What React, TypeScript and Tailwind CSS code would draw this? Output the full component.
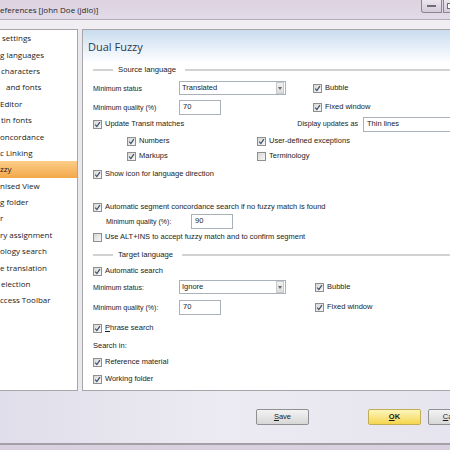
import type { ReactNode } from 'react';

const navItems = [
  { t: 'settings', pad: 'pl-[2px]' },
  { t: 'g languages', pad: 'pl-0' },
  { t: 'characters', pad: 'pl-[1px]' },
  { t: 'and fonts', pad: 'pl-[6px]' },
  { t: 'Editor', pad: 'pl-0' },
  { t: 'tin fonts', pad: 'pl-[1px]' },
  { t: 'oncordance', pad: 'pl-0' },
  { t: 'c Linking', pad: 'pl-0' },
  { t: 'zzy', pad: 'pl-0', sel: true },
  { t: 'nised View', pad: 'pl-0' },
  { t: 'g folder', pad: 'pl-0' },
  { t: 'r', pad: 'pl-0' },
  { t: 'ry assignment', pad: 'pl-0' },
  { t: 'ology search', pad: 'pl-0' },
  { t: 'e translation', pad: 'pl-0' },
  { t: 'election', pad: 'pl-[1px]' },
  { t: 'ccess Toolbar', pad: 'pl-0' },
];

function Box({ on = true }: { on?: boolean }) {
  return (
    <span className="w-[9px] h-[9px] shrink-0 border border-[#8e8f8f] bg-linear-to-br from-[#d8d8d8] to-[#f7f7f7] flex items-center justify-center">
      {on && (
        <svg viewBox="0 0 7 7" className="w-[7px] h-[7px]">
          <path d="M1.2 3.6 L2.9 5.6 L5.9 1.2" stroke="#3d4d66" strokeWidth="1.2" fill="none" />
        </svg>
      )}
    </span>
  );
}

function CheckItem({ label, on = true, className = '' }: { label: ReactNode; on?: boolean; className?: string }) {
  return (
    <div className={`flex items-center gap-[3px] shrink-0 ${className}`}>
      <Box on={on} />
      <span className="text-[7.5px] leading-none whitespace-nowrap">{label}</span>
    </div>
  );
}

function Row({ mt, children, className = '' }: { mt: string; children: ReactNode; className?: string }) {
  return <div className={`flex items-center h-[14px] ${mt} ${className}`}>{children}</div>;
}

function Section({ title, mt }: { title: string; mt: string }) {
  return (
    <Row mt={mt}>
      <div className="w-[20px] h-[2px] bg-[#d2d2d2]" />
      <span className="ml-[5px] mr-[9px] text-[7.7px] leading-none whitespace-nowrap">{title}</span>
      <div className="flex-1 h-[2px] bg-[#d2d2d2]" />
    </Row>
  );
}

function TextBox({ value, w }: { value: string; w: string }) {
  return (
    <div className={`${w} h-[15px] shrink-0 border border-[#abb1b9] bg-white pl-[3px] pt-[2px] text-[7.5px] leading-none`}>
      {value}
    </div>
  );
}

function Combo({ value }: { value: string }) {
  return (
    <div className="w-[107px] h-[14px] shrink-0 border border-[#abb1b9] bg-white flex items-center">
      <span className="flex-1 pl-[2px] text-[7.5px] leading-none">{value}</span>
      <span className="w-[8px] h-[12px] mr-px border border-[#c9c9c9] bg-linear-to-b from-[#f2f2f2] to-[#dcdcdc] flex items-center justify-center">
        <svg viewBox="0 0 4 3" className="w-[4px] h-[3px]">
          <path d="M0 0 H4 L2 3 Z" fill="#6b6b6b" />
        </svg>
      </span>
    </div>
  );
}

function Btn({ children, ok = false, className = '' }: { children: ReactNode; ok?: boolean; className?: string }) {
  return (
    <div
      className={`w-[53px] h-[16px] shrink-0 rounded-[2px] border flex items-center justify-center text-[7.5px] leading-none ${
        ok
          ? 'border-[#c2ad52] bg-linear-to-b from-[#fdf6b8] to-[#f5d54a] font-bold'
          : 'border-[#8f9092] bg-linear-to-b from-[#f3f3f3] to-[#d7d7d7]'
      } ${className}`}
    >
      {children}
    </div>
  );
}

export default function App() {
  return (
    <div className="w-[450px] h-[450px] overflow-hidden flex flex-col bg-[#ebe8f0] font-['Liberation_Sans',Arial,sans-serif] text-[#1c1c1c]">
      {/* Title bar */}
      <div className="h-[20px] shrink-0 flex items-start bg-linear-to-b from-[#dcd2e1] to-[#e2dbe7] border-b border-[#b4adbb]">
        <span className="w-[421px] shrink-0 font-['Open_Sans',sans-serif] text-[8px] leading-[19px] whitespace-nowrap text-[#1f1f1f]">
          eferences [John Doe (jdlo)]
        </span>
        <div className="flex shrink-0">
          <div className="w-[21px] h-[13px] rounded-bl-[3px] border border-t-0 border-[#8a8694] bg-linear-to-b from-[#ebe6ee] to-[#d3cbd9] flex items-center justify-center">
            <div className="w-[9px] h-[2px] border border-[#6f6b78] bg-white" />
          </div>
          <div className="w-[20px] h-[13px] ml-px border border-t-0 border-[#8a8694] bg-linear-to-b from-[#ebe6ee] to-[#d3cbd9] flex items-center pl-[3px]">
            <div className="w-[7px] h-[6px] border border-[#6f6b78] bg-white" />
          </div>
        </div>
      </div>
      <div className="h-[9px] shrink-0 bg-[#f0eef3]" />

      {/* Body */}
      <div className="h-[362px] shrink-0 flex">
        {/* Left list */}
        <div className="w-[78px] shrink-0 bg-white border-y border-r border-[#a7a7a7] font-['Open_Sans',sans-serif] text-[8px] text-[#222]">
          {navItems.map((it) => (
            <div
              key={it.t}
              className={`h-[16.4px] flex items-center whitespace-nowrap ${it.pad} ${
                it.sel ? 'bg-linear-to-b from-[#fbcd88] to-[#f4a847]' : ''
              }`}
            >
              {it.t}
            </div>
          ))}
        </div>
        <div className="w-[4px] shrink-0" />

        {/* Right panel */}
        <div className="flex-1 bg-white border border-r-0 border-[#a7a7a7] flex flex-col">
          <div className="h-[33px] shrink-0 bg-linear-to-b from-[#c9dcee] via-[#e4eef8] to-white pl-[5px] pt-[7px]">
            <span className="block font-['Open_Sans',sans-serif] text-[11px] leading-[20px] text-[#2c394c]">Dual Fuzzy</span>
          </div>
          <div className="pl-[10px] flex flex-col">
            <Section title="Source language" mt="mt-0" />
            <Row mt="mt-[4px]">
              <span className="w-[86px] shrink-0 text-[7px] leading-none">Minimum status</span>
              <Combo value="Translated" />
              <CheckItem label="Bubble" className="ml-[27px]" />
            </Row>
            <Row mt="mt-[5px]">
              <span className="w-[86px] shrink-0 text-[7px] leading-none">Minimum quality (%)</span>
              <TextBox value="70" w="w-[42px]" />
              <CheckItem label="Fixed window" className="ml-[92px]" />
            </Row>
            <Row mt="mt-[3px]">
              <CheckItem label="Update Transit matches" className="w-[201px]" />
              <span className="w-[64px] shrink-0 text-right text-[7.2px] leading-none whitespace-nowrap">Display updates as</span>
              <div className="ml-[5px]">
                <TextBox value="Thin lines" w="w-[100px]" />
              </div>
            </Row>
            <Row mt="mt-[3px]" className="pl-[34px]">
              <CheckItem label="Numbers" className="w-[130px]" />
              <CheckItem label="User-defined exceptions" />
            </Row>
            <Row mt="mt-[1px]" className="pl-[34px]">
              <CheckItem label="Markups" className="w-[130px]" />
              <CheckItem label="Terminology" on={false} />
            </Row>
            <Row mt="mt-[4px]">
              <CheckItem label="Show icon for language direction" />
            </Row>
            <Row mt="mt-[19px]">
              <CheckItem label="Automatic segment concordance search if no fuzzy match is found" />
            </Row>
            <Row mt="mt-0" className="pl-[13px]">
              <span className="w-[85px] shrink-0 text-[7px] leading-none">Minimum quality (%):</span>
              <TextBox value="90" w="w-[42px]" />
            </Row>
            <Row mt="mt-[2px]">
              <CheckItem label="Use ALT+INS to accept fuzzy match and to confirm segment" on={false} />
            </Row>
            <Section title="Target language" mt="mt-[4px]" />
            <Row mt="mt-[2px]">
              <CheckItem label="Automatic search" />
            </Row>
            <Row mt="mt-[2px]">
              <span className="w-[86px] shrink-0 text-[7px] leading-none">Minimum status:</span>
              <Combo value="Ignore" />
              <CheckItem label="Bubble" className="ml-[29px]" />
            </Row>
            <Row mt="mt-[6px]">
              <span className="w-[86px] shrink-0 text-[7px] leading-none">Minimum quality (%):</span>
              <TextBox value="70" w="w-[42px]" />
              <CheckItem label="Fixed window" className="ml-[94px]" />
            </Row>
            <Row mt="mt-[7px]">
              <CheckItem
                label={
                  <>
                    <span className="underline">P</span>hrase search
                  </>
                }
              />
            </Row>
            <Row mt="mt-[4px]">
              <span className="text-[7.5px] leading-none">Search in:</span>
            </Row>
            <Row mt="mt-[2px]">
              <CheckItem label="Reference material" />
            </Row>
            <Row mt="mt-[3px]">
              <CheckItem label="Working folder" />
            </Row>
          </div>
        </div>
      </div>

      {/* Button bar */}
      <div className="h-[52px] shrink-0 flex items-center bg-linear-to-r from-[#e0deea] via-[#ecebf2] to-[#e6e4ee]">
        <Btn className="ml-[256px]">
          <span>
            <span className="underline">S</span>ave
          </span>
        </Btn>
        <Btn ok className="ml-[59px]">
          <span>
            <span className="underline">O</span>K
          </span>
        </Btn>
        <Btn className="ml-[7px]">
          <span>
            <span className="underline">C</span>ancel
          </span>
        </Btn>
      </div>
      <div className="h-[2px] shrink-0 bg-[#a29fa7]" />
      <div className="flex-1 bg-[#d9d1df]" />
    </div>
  );
}
